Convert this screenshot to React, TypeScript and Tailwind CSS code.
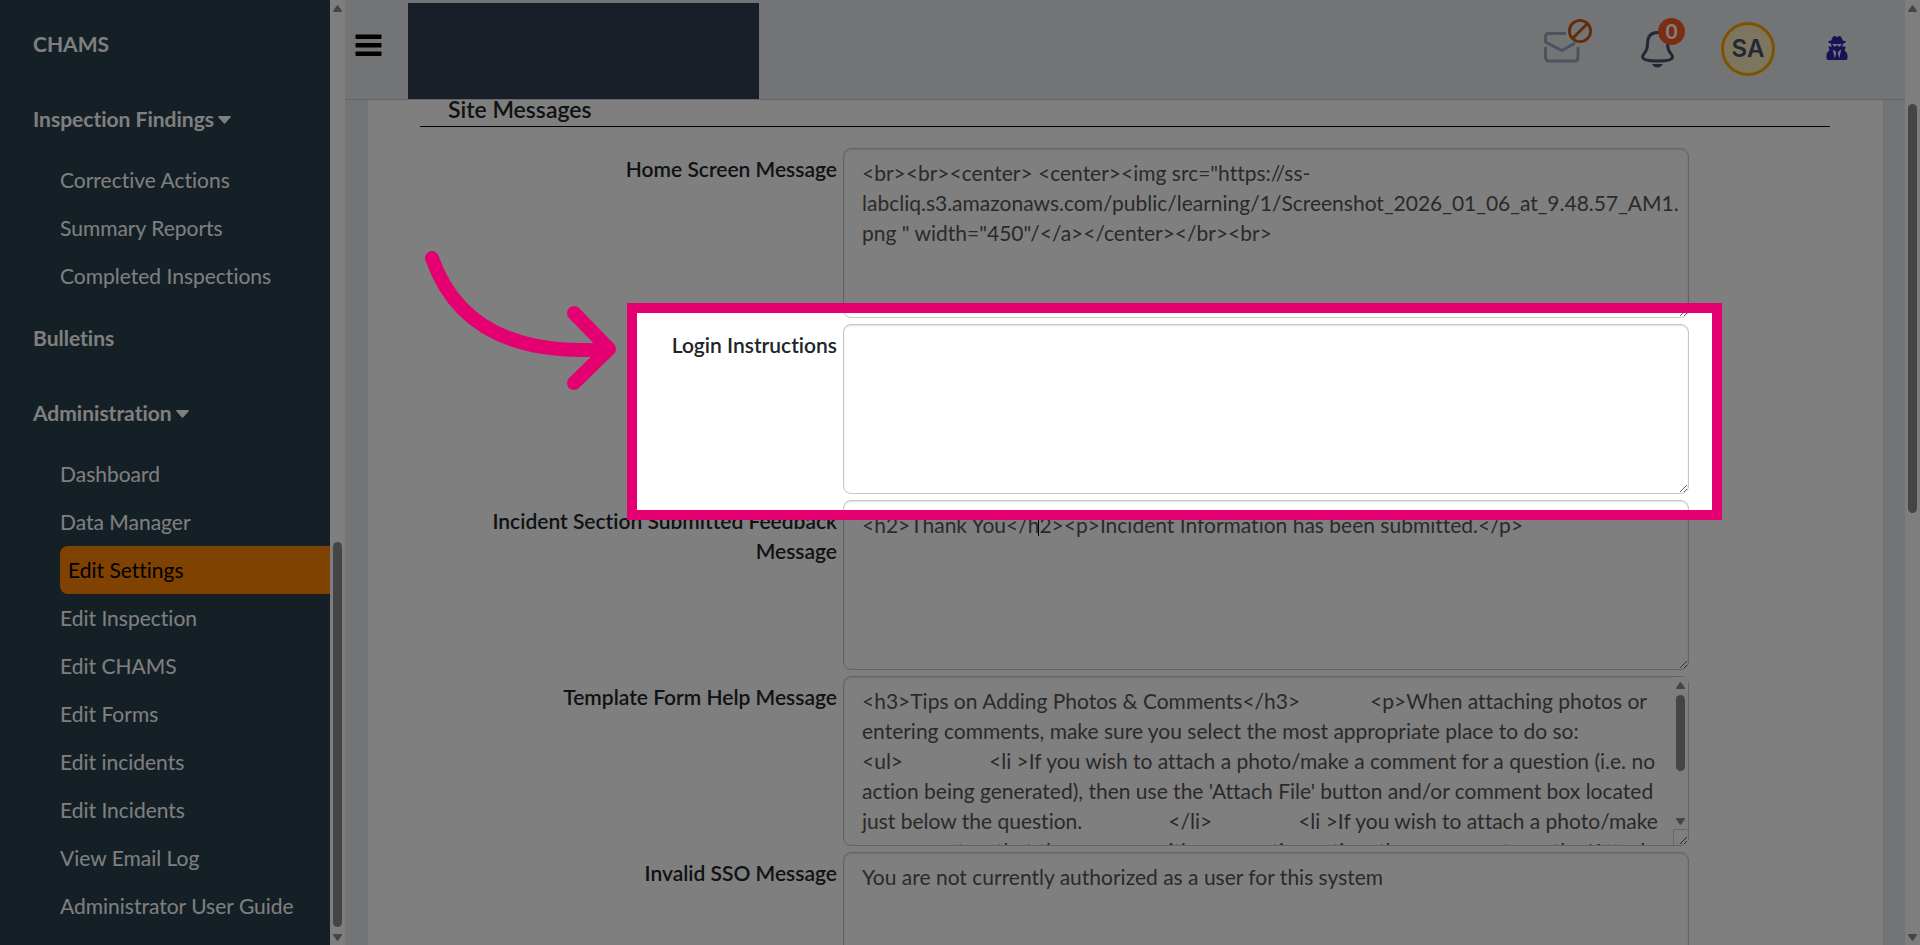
import React from "react";
import { FaUserSecret } from "react-icons/fa";

type Field = { id: string; label: string; value: string; scroll?: boolean; caret?: boolean };

const gap13 = " ".repeat(13);
const gap16 = " ".repeat(16);

const fields: Field[] = [
  {
    id: "home",
    label: "Home Screen Message",
    value:
      '<br><br><center> <center><img src="https://ss-labcliq.s3.amazonaws.com/public/learning/1/Screenshot_2026_01_06_at_9.48.57_AM1.png " width="450"/</a></center></br><br>',
  },
  { id: "login", label: "Login Instructions", value: "" },
  {
    id: "incident",
    label: "Incident Section Submitted Feedback Message",
    value: "<h2>Thank You</h2><p>Incident Information has been submitted.</p>",
    caret: true,
  },
  {
    id: "template",
    label: "Template Form Help Message",
    value: `<h3>Tips on Adding Photos & Comments</h3>${gap13}<p>When attaching photos or entering comments, make sure you select the most appropriate place to do so:${gap13}<ul>${gap16}<li >If you wish to attach a photo/make a comment for a question (i.e. no action being generated), then use the 'Attach File' button and/or comment box located just below the question.${gap16}</li>${gap16}<li >If you wish to attach a photo/make a comment so that they appear with a corrective action, then you must use the 'Attach`,
    scroll: true,
  },
  { id: "sso", label: "Invalid SSO Message", value: "You are not currently authorized as a user for this system" },
];

const inspectionLinks = ["Corrective Actions", "Summary Reports", "Completed Inspections"];
const adminLinks = [
  "Dashboard",
  "Data Manager",
  "Edit Settings",
  "Edit Inspection",
  "Edit CHAMS",
  "Edit Forms",
  "Edit incidents",
  "Edit Incidents",
  "View Email Log",
  "Administrator User Guide",
];

function ScrollArrow({ down = false }: { down?: boolean }) {
  return (
    <svg viewBox="0 0 9 7" className="h-[7px] w-[9px] shrink-0" aria-hidden="true">
      <path d={down ? "M0 1Q0 0 1 0H8Q9 0 9 1L5.2 6.4Q4.5 7.2 3.8 6.4Z" : "M0 6Q0 7 1 7H8Q9 7 9 6L5.2 .6Q4.5-.2 3.8 .6Z"} fill="#8b8b8b" />
    </svg>
  );
}

function Scrollbar({ above, thumb, below }: { above: string; thumb: string; below: string }) {
  return (
    <div className="flex w-[15px] shrink-0 grow flex-col items-center bg-[#fcfcfc] pt-[5px] pb-1" aria-hidden="true">
      <ScrollArrow />
      <div className={above} />
      <div className={`w-[9px] shrink-0 rounded-full bg-[#8b8b8b] ${thumb}`} />
      <div className={below} />
      <ScrollArrow down />
    </div>
  );
}

function NavGroup({ title, links }: { title: string; links: string[] }) {
  return (
    <li>
      <button type="button" className="flex h-[74px] items-center gap-1 pl-[33px] font-bold">
        {title}
        <svg viewBox="0 0 13 8" className="mt-0.5 h-2 w-[13px]" fill="currentColor" aria-hidden="true">
          <path d="M1 0H12Q13.4 .2 12.6 1.3L7.3 7.3Q6.5 8 5.7 7.3L.4 1.3Q-.4 .2 1 0Z" />
        </svg>
      </button>
      <ul className="pl-[60px]">
        {links.map((link) => (
          <li key={link}>
            <a
              href="#"
              className={
                link === "Edit Settings"
                  ? "flex h-12 items-center rounded-l-lg bg-[#ff8400] pl-2 text-black"
                  : "flex h-12 items-center"
              }
            >
              {link}
            </a>
          </li>
        ))}
      </ul>
    </li>
  );
}

function MessageField({ field }: { field: Field }) {
  return (
    <div className="flex">
      <label htmlFor={field.id} className="w-[30%] pt-1.5 pr-1.5 text-right font-semibold text-[#212529]">
        {field.label}
      </label>
      <div className="relative w-[60%]">
        <textarea
          id={field.id}
          defaultValue={field.value}
          rows={5}
          spellCheck={false}
          className={`block h-[170px] w-full resize-y overflow-hidden rounded-lg border border-[#c6c6c6] bg-white py-[9px] pl-[18px] text-[#555] shadow-[inset_0_1px_2px_rgba(0,0,0,0.12)] outline-none ${
            field.scroll ? "pr-7" : "pr-2"
          }`}
        />
        {field.caret && <div className="absolute top-3 left-[195px] h-6 w-px bg-black" />}
        {field.scroll && (
          <div className="absolute inset-y-px right-px flex w-[15px] flex-col" aria-hidden="true">
            <Scrollbar above="h-1.5" thumb="h-[76px]" below="grow" />
            <div className="flex h-4 w-full items-end justify-end border-t border-l border-[#d0d0d0] bg-white p-px">
              <svg viewBox="0 0 7 7" className="size-[7px]" stroke="#555">
                <path d="M0 7L7 0M4 7L7 4" />
              </svg>
            </div>
          </div>
        )}
      </div>
    </div>
  );
}

export default function App() {
  return (
    <div className="relative flex h-screen overflow-hidden bg-white font-[Lato,sans-serif] text-[21px] leading-[30px] [font-variant-ligatures:none]">
      <nav className="w-[330px] shrink-0 overflow-hidden bg-[#2a404c] pt-1.5 text-white">
        <ul>
          <li>
            <a href="#" className="flex h-[76px] items-center pl-[33px] font-bold">CHAMS</a>
          </li>
          <NavGroup title="Inspection Findings" links={inspectionLinks} />
          <li>
            <a href="#" className="flex h-[76px] items-center pl-[33px] font-bold">Bulletins</a>
          </li>
          <NavGroup title="Administration" links={adminLinks} />
        </ul>
      </nav>
      <div className="flex shrink-0">
        <Scrollbar above="grow" thumb="h-[385px]" below="h-[7px]" />
      </div>

      <div className="flex min-w-0 grow flex-col bg-[#e6e8ec]">
        <header className="flex h-[100px] shrink-0 items-center border-b border-[#c8cbd1] pr-14 pl-2.5">
          <button type="button" aria-label="Toggle menu" className="mb-2.5 text-black">
            <svg viewBox="0 0 27 22" className="h-[22px] w-[27px]" fill="currentColor">
              <rect x=".5" y=".5" width="26" height="4.5" rx=".7" />
              <rect x=".5" y="9" width="26" height="4.5" rx=".7" />
              <rect x=".5" y="17.5" width="26" height="4.5" rx=".7" />
            </svg>
          </button>
          <div className="mt-[3px] ml-[26px] h-24 w-[351px] bg-[#323e50]" />
          <div className="ml-auto flex items-center pb-0.5">
            <button type="button" aria-label="Messages" className="mr-[46px]">
              <svg viewBox="0 0 50 60" className="h-[60px] w-[50px]" fill="none">
                <path d="M24 14.5H7Q3.5 14.5 3.5 18V23L20 31.5L33 24M3.5 28V38Q3.5 42 7 42H33Q36 42 36 38V28" stroke="#97a6bf" strokeWidth="3" />
                <circle cx="38" cy="12" r="10.6" stroke="#c25a10" strokeWidth="2.8" />
                <path d="M30.5 19.5L45.5 4.5" stroke="#c25a10" strokeWidth="2.8" />
              </svg>
            </button>
            <button type="button" aria-label="Notifications" className="relative mr-[33px]">
              <svg viewBox="0 0 50 64" className="h-16 w-[50px]" fill="none">
                <path d="M19.5 15.5C13 15.5 9.5 19 9.5 27C9.5 36 4.8 36 4.5 40C5 43 12 44 19.5 44C27 44 34.5 43 34.5 40C34.2 36 29.5 36 29.5 27C29.5 19 26 15.5 19.5 15.5Z" stroke="#40526a" strokeWidth="3" />
                <path d="M14 47H24.8Q22.8 50.5 19.4 50.5Q16 50.5 14 47Z" fill="#40526a" />
              </svg>
              <span className="absolute top-px left-5 flex size-[27px] items-center justify-center rounded-full bg-[#f65a28] font-bold text-white">0</span>
            </button>
            <button type="button" className="mr-[50px] size-[54px] rounded-full border-[3px] border-[#ffa500] bg-[#fbeabb] font-[Inter,sans-serif] text-[24px] font-semibold text-[#40526a]">
              SA
            </button>
            <button type="button" aria-label="Impersonate user" className="mb-0.5 rounded-full bg-white/30 text-[#2c24a8]">
              <FaUserSecret className="size-6" />
            </button>
          </div>
        </header>
        <main className="mr-[22px] ml-[23px] min-h-0 grow overflow-hidden bg-white pr-[53px] pl-[52px]">
          <h2 className="mb-[21px] h-[27px] border-b border-black pl-7 text-[23px] leading-[18px] font-semibold text-[#212529]">
            Site Messages
          </h2>
          <form className="flex flex-col gap-1.5">
            {fields.map((f) => (
              <MessageField key={f.id} field={f} />
            ))}
          </form>
        </main>
      </div>
      <div className="flex shrink-0">
        <Scrollbar above="h-[92px]" thumb="h-[409px]" below="grow" />
      </div>

      <div className="pointer-events-none absolute top-[303px] left-[627px] h-[217px] w-[1095px] border-[10px] border-[#e50071] shadow-[0_0_0_2000px_rgba(0,0,0,0.5)]" />
      <svg viewBox="0 0 200 150" className="pointer-events-none absolute top-[245px] left-[420px] h-[150px] w-[200px]" fill="none" stroke="#e50071" strokeWidth="14" strokeLinecap="round" strokeLinejoin="round">
        <path d="M12 13C36 82 96 111 188 104M154 68L189 104L154 138" />
      </svg>
    </div>
  );
}
